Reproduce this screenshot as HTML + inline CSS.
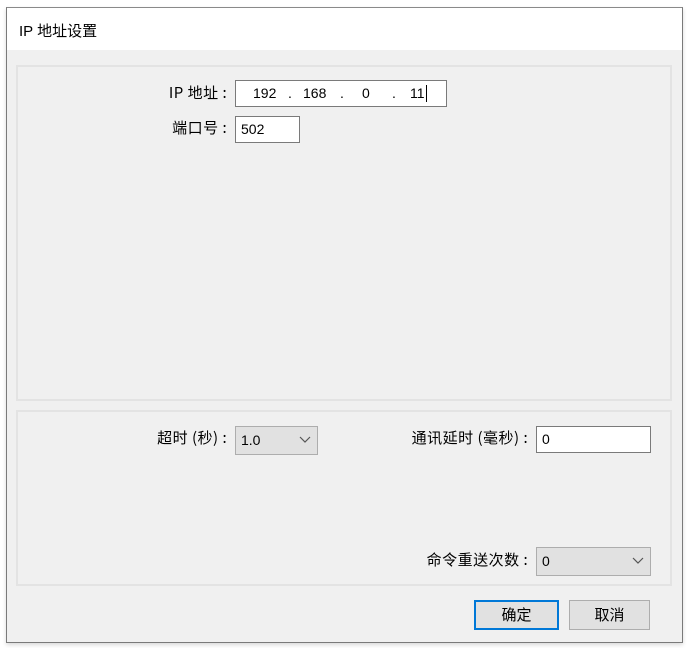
<!DOCTYPE html>
<html><head><meta charset="utf-8"><style>
*{box-sizing:border-box;margin:0;padding:0}
body{width:688px;height:648px;background:#fff;position:relative;overflow:hidden;font-family:"Liberation Sans","Noto Sans CJK SC",sans-serif;font-size:14px;color:#000}
.a{position:absolute}
.dlg{left:6px;top:7px;width:677px;height:636px;border:1px solid #7a7a7a;border-top-color:#8a8a8a;background:#f0f0f0;box-shadow:0 2px 4px rgba(0,0,0,.15)}
.title{left:7px;top:8px;width:675px;height:42px;background:#fff;padding:12px 0 0 12px;font-size:15px}
.panel{border:2px solid #e3e3e3;}
.box{background:#fff;border:1px solid #7a7a7a;padding-left:5px;line-height:24px}
.cb{background:#e1e1e1;border:1px solid #adadad;padding-left:5px;line-height:26px}
.cb svg{position:absolute;right:6px;top:9px}
.lbl{text-align:right;white-space:nowrap;font-family:"Noto Sans CJK SC",sans-serif;line-height:20px;font-size:15px;letter-spacing:0.5px}
.btn{background:#e1e1e1;border:1px solid #adadad;text-align:center;line-height:27px;font-family:"Noto Sans CJK SC",sans-serif;font-size:15px}
.d{position:absolute;top:0}
</style></head><body>
<div class="a dlg"></div>
<div class="a title">IP 地址设置</div>
<div class="a panel" style="left:16px;top:65px;width:656px;height:336px"></div>
<div class="a panel" style="left:16px;top:410px;width:656px;height:176px"></div>

<div class="a lbl" style="left:60px;top:83px;width:171px">IP 地址&nbsp;:&nbsp;</div>
<div class="a box" style="left:235px;top:80px;width:212px;height:27px">
<span class="d" style="left:17px">192</span><span class="d" style="left:52px">.</span><span class="d" style="left:67px">168</span><span class="d" style="left:104px">.</span><span class="d" style="left:126px">0</span><span class="d" style="left:156px">.</span><span class="d" style="left:174px">11</span><span class="d" style="left:190px;top:4px;width:1px;height:17px;background:#000"></span>
</div>
<div class="a lbl" style="left:60px;top:118px;width:171px">端口号&nbsp;:&nbsp;</div>
<div class="a box" style="left:235px;top:116px;width:65px;height:27px">502</div>

<div class="a lbl" style="left:60px;top:428px;width:171px">超时 (秒)&nbsp;:&nbsp;</div>
<div class="a cb" style="left:235px;top:426px;width:83px;height:29px">1.0<svg width="12" height="8"><path d="M1 1L6 6L11 1" fill="none" stroke="#555" stroke-width="1.2"/></svg></div>

<div class="a lbl" style="left:330px;top:428px;width:202px">通讯延时 (毫秒)&nbsp;:&nbsp;</div>
<div class="a box" style="left:536px;top:426px;width:115px;height:27px">0</div>

<div class="a lbl" style="left:330px;top:550px;width:202px">命令重送次数&nbsp;:&nbsp;</div>
<div class="a cb" style="left:536px;top:547px;width:115px;height:29px">0<svg width="12" height="8"><path d="M1 1L6 6L11 1" fill="none" stroke="#555" stroke-width="1.2"/></svg></div>

<div class="a btn" style="left:474px;top:600px;width:85px;height:30px;border:2px solid #0078d7;line-height:26px">确定</div>
<div class="a btn" style="left:569px;top:600px;width:81px;height:30px">取消</div>
</body></html>
